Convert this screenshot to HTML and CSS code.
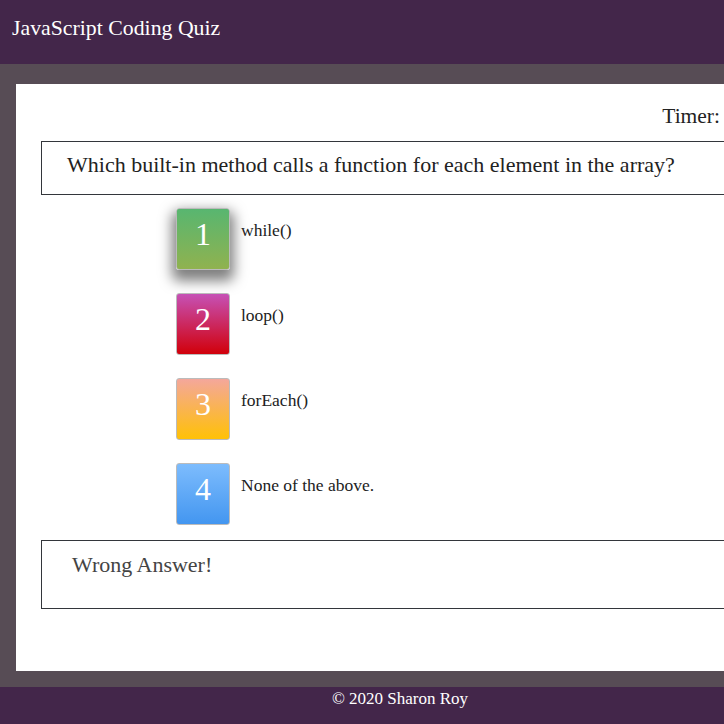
FILE: index.html
```html
<!DOCTYPE html>
<html lang="en">
<head>
<meta charset="utf-8">
<title>JavaScript Coding Quiz</title>
<link rel="stylesheet" href="styles.css">
</head>
<body>
<header class="site-header">
  <h1 class="site-title">JavaScript Coding Quiz</h1>
</header>
<main class="stage">
  <section class="panel">
    <div class="timer-row"><span class="timer">Timer: <span class="timer-value"></span></span></div>
    <div class="question-box">
      <p class="question">Which built-in method calls a function for each element in the array?</p>
    </div>
    <ul class="options">
      <li class="option"><button class="opt-btn opt-1 is-hover">1</button><span class="opt-label">while()</span></li>
      <li class="option"><button class="opt-btn opt-2">2</button><span class="opt-label">loop()</span></li>
      <li class="option"><button class="opt-btn opt-3">3</button><span class="opt-label">forEach()</span></li>
      <li class="option"><button class="opt-btn opt-4">4</button><span class="opt-label">None of the above.</span></li>
    </ul>
    <div class="feedback-box">
      <p class="feedback">Wrong Answer!</p>
    </div>
  </section>
</main>
<footer class="site-footer">© 2020 Sharon Roy</footer>
</body>
</html>
```

FILE: styles.css
```css
html {
  overflow: hidden;
}
body {
  margin: 0;
  width: 800px;
  font-family: "Liberation Serif", "DejaVu Serif", serif;
  color: #222;
}
.site-header {
  background: #43264a;
  height: 64px;
  display: flex;
  align-items: center;
  padding-left: 12px;
}
.site-title {
  margin: 0;
  font-weight: normal;
  font-size: 21.8px;
  color: #fff;
  margin-top: -8px;
}
.stage {
  background: #574c55;
  padding: 20px 16px 16px;
}
.panel {
  background: #fff;
  height: 587px;
  padding: 20px 0 0 25px;
  box-sizing: border-box;
}
.timer-row {
  display: flex;
  justify-content: flex-end;
  padding-right: 64px;
  font-size: 21.5px;
  height: 37px;
}
.question-box {
  border: 1px solid #33363b;
  height: 52px;
  padding-left: 25px;
}
.question {
  margin: 0;
  padding-top: 10px;
  font-size: 22px;
  color: #222;
}
.options {
  list-style: none;
  margin: 13px 0 0 135px;
  padding: 0;
  display: flex;
  flex-direction: column;
  gap: 23px;
}
.option {
  display: flex;
  align-items: flex-start;
}
.opt-btn {
  width: 54px;
  height: 62px;
  border: 1px solid #bbb;
  border-radius: 3px;
  color: #fff;
  font-family: inherit;
  font-size: 32px;
  padding: 0 0 10px;
  line-height: 1;
}
.opt-1 { background: linear-gradient(#58b670, #90b24f); }
.opt-2 { background: linear-gradient(#c651b6, #d1000a); }
.opt-3 { background: linear-gradient(#f4a79b, #ffc106); }
.opt-4 { background: linear-gradient(#7dbcfd, #4396f0); }
.is-hover {
  box-shadow: 0 7px 13px 4px rgba(0, 0, 0, 0.5);
}
.opt-label {
  margin-left: 11px;
  padding-top: 12px;
  font-size: 17.5px;
  line-height: 20px;
  color: #222;
}
.feedback-box {
  margin-top: 15px;
  border: 1px solid #33363b;
  height: 67px;
  padding-left: 30px;
}
.feedback {
  margin: 0;
  padding-top: 11px;
  font-size: 22px;
  color: #444;
}
.site-footer {
  background: #43264a;
  height: 37px;
  color: #fff;
  text-align: center;
  font-size: 17px;
  line-height: 24px;
}
```
